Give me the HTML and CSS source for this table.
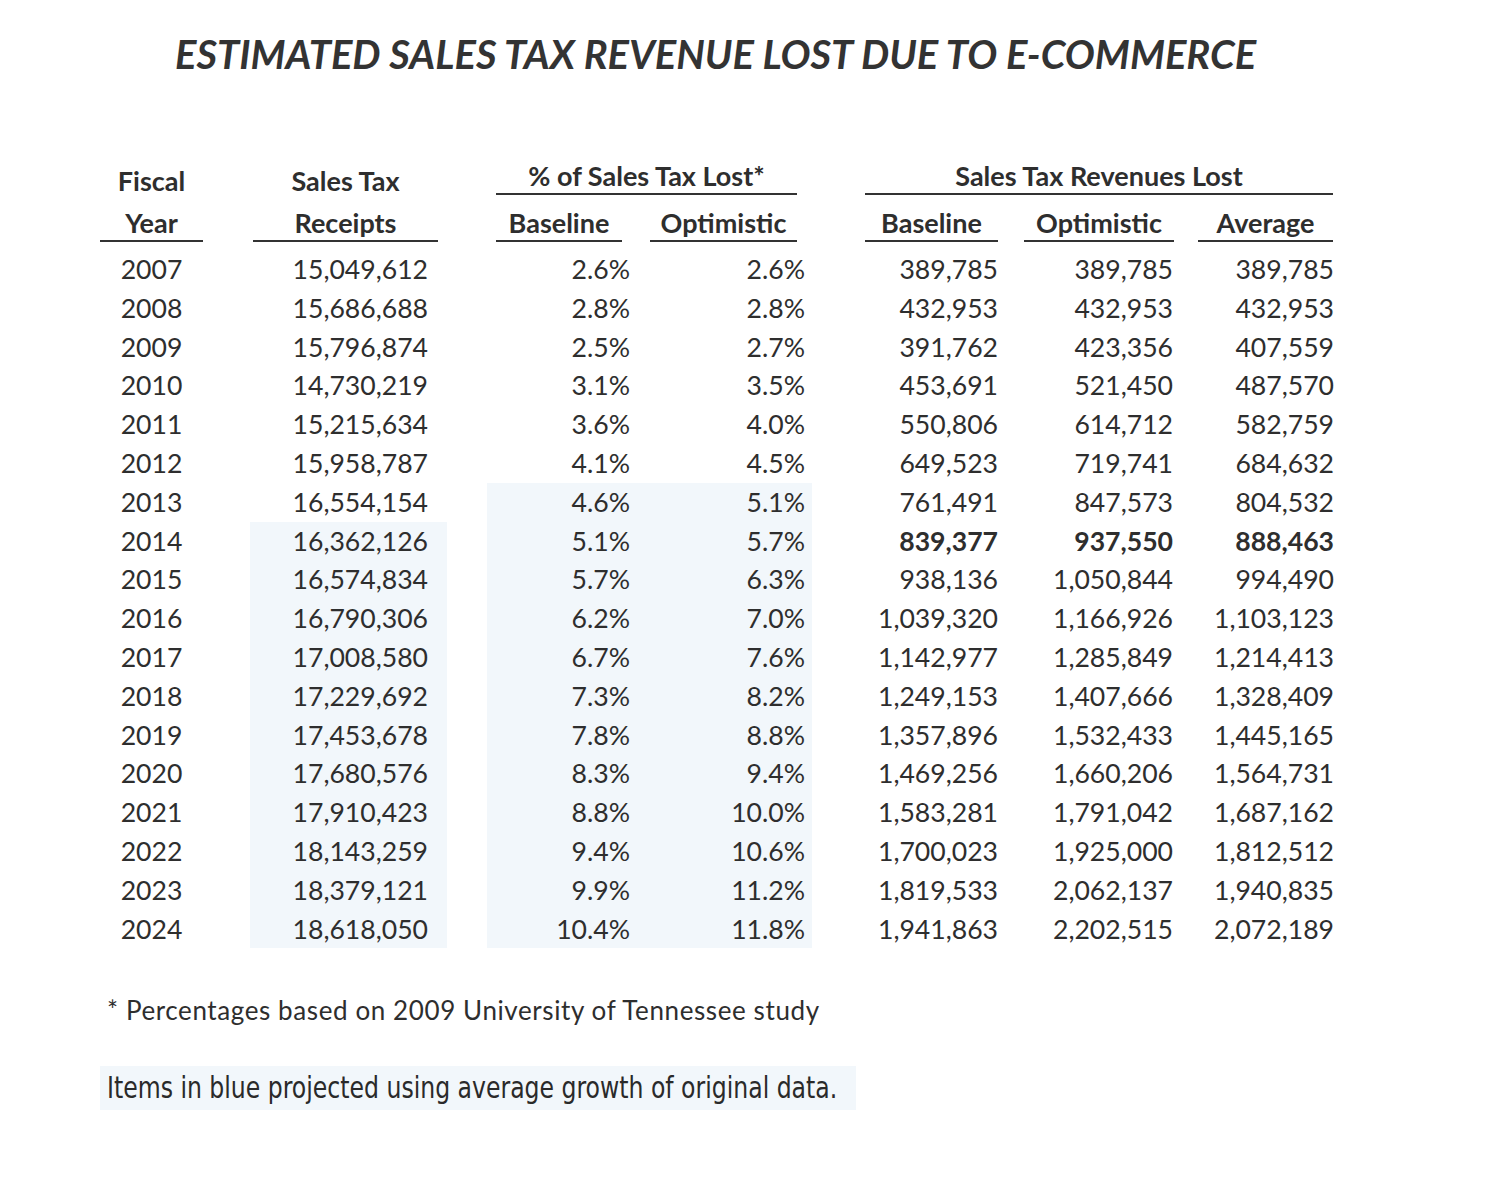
FILE: index.html
```html
<!DOCTYPE html>
<html lang="en">
<head>
<meta charset="utf-8">
<title>Estimated Sales Tax Revenue Lost Due to E-Commerce</title>
<link rel="stylesheet" href="styles.css">
</head>
<body>
<main class="page">
  <h1 class="title">ESTIMATED SALES TAX REVENUE LOST DUE TO E-COMMERCE</h1>

  <section class="table">
    <div class="head head-1">
      <div class="h h-year">Fiscal</div>
      <div class="h h-rec">Sales Tax</div>
      <div class="h h-pct-group">% of Sales Tax Lost*</div>
      <div class="h h-rev-group">Sales Tax Revenues Lost</div>
    </div>
    <div class="head head-2">
      <div class="h u h-year">Year</div>
      <div class="h u h-rec">Receipts</div>
      <div class="h u h-pb">Baseline</div>
      <div class="h u h-po">Optimistic</div>
      <div class="h u h-rb">Baseline</div>
      <div class="h u h-ro">Optimistic</div>
      <div class="h u h-ra">Average</div>
    </div>

    <div class="rows">
      <div class="row"><div class="c yr">2007</div><div class="c rec">15,049,612</div><div class="c pb">2.6%</div><div class="c po">2.6%</div><div class="c rb">389,785</div><div class="c ro">389,785</div><div class="c ra">389,785</div></div>
      <div class="row"><div class="c yr">2008</div><div class="c rec">15,686,688</div><div class="c pb">2.8%</div><div class="c po">2.8%</div><div class="c rb">432,953</div><div class="c ro">432,953</div><div class="c ra">432,953</div></div>
      <div class="row"><div class="c yr">2009</div><div class="c rec">15,796,874</div><div class="c pb">2.5%</div><div class="c po">2.7%</div><div class="c rb">391,762</div><div class="c ro">423,356</div><div class="c ra">407,559</div></div>
      <div class="row"><div class="c yr">2010</div><div class="c rec">14,730,219</div><div class="c pb">3.1%</div><div class="c po">3.5%</div><div class="c rb">453,691</div><div class="c ro">521,450</div><div class="c ra">487,570</div></div>
      <div class="row"><div class="c yr">2011</div><div class="c rec">15,215,634</div><div class="c pb">3.6%</div><div class="c po">4.0%</div><div class="c rb">550,806</div><div class="c ro">614,712</div><div class="c ra">582,759</div></div>
      <div class="row"><div class="c yr">2012</div><div class="c rec">15,958,787</div><div class="c pb">4.1%</div><div class="c po">4.5%</div><div class="c rb">649,523</div><div class="c ro">719,741</div><div class="c ra">684,632</div></div>
      <div class="row"><div class="c yr">2013</div><div class="c rec">16,554,154</div><div class="c pb proj">4.6%</div><div class="c po proj">5.1%</div><div class="c rb">761,491</div><div class="c ro">847,573</div><div class="c ra">804,532</div></div>
      <div class="row"><div class="c yr">2014</div><div class="c rec proj">16,362,126</div><div class="c pb proj">5.1%</div><div class="c po proj">5.7%</div><div class="c rb bold">839,377</div><div class="c ro bold">937,550</div><div class="c ra bold">888,463</div></div>
      <div class="row"><div class="c yr">2015</div><div class="c rec proj">16,574,834</div><div class="c pb proj">5.7%</div><div class="c po proj">6.3%</div><div class="c rb">938,136</div><div class="c ro">1,050,844</div><div class="c ra">994,490</div></div>
      <div class="row"><div class="c yr">2016</div><div class="c rec proj">16,790,306</div><div class="c pb proj">6.2%</div><div class="c po proj">7.0%</div><div class="c rb">1,039,320</div><div class="c ro">1,166,926</div><div class="c ra">1,103,123</div></div>
      <div class="row"><div class="c yr">2017</div><div class="c rec proj">17,008,580</div><div class="c pb proj">6.7%</div><div class="c po proj">7.6%</div><div class="c rb">1,142,977</div><div class="c ro">1,285,849</div><div class="c ra">1,214,413</div></div>
      <div class="row"><div class="c yr">2018</div><div class="c rec proj">17,229,692</div><div class="c pb proj">7.3%</div><div class="c po proj">8.2%</div><div class="c rb">1,249,153</div><div class="c ro">1,407,666</div><div class="c ra">1,328,409</div></div>
      <div class="row"><div class="c yr">2019</div><div class="c rec proj">17,453,678</div><div class="c pb proj">7.8%</div><div class="c po proj">8.8%</div><div class="c rb">1,357,896</div><div class="c ro">1,532,433</div><div class="c ra">1,445,165</div></div>
      <div class="row"><div class="c yr">2020</div><div class="c rec proj">17,680,576</div><div class="c pb proj">8.3%</div><div class="c po proj">9.4%</div><div class="c rb">1,469,256</div><div class="c ro">1,660,206</div><div class="c ra">1,564,731</div></div>
      <div class="row"><div class="c yr">2021</div><div class="c rec proj">17,910,423</div><div class="c pb proj">8.8%</div><div class="c po proj">10.0%</div><div class="c rb">1,583,281</div><div class="c ro">1,791,042</div><div class="c ra">1,687,162</div></div>
      <div class="row"><div class="c yr">2022</div><div class="c rec proj">18,143,259</div><div class="c pb proj">9.4%</div><div class="c po proj">10.6%</div><div class="c rb">1,700,023</div><div class="c ro">1,925,000</div><div class="c ra">1,812,512</div></div>
      <div class="row"><div class="c yr">2023</div><div class="c rec proj">18,379,121</div><div class="c pb proj">9.9%</div><div class="c po proj">11.2%</div><div class="c rb">1,819,533</div><div class="c ro">2,062,137</div><div class="c ra">1,940,835</div></div>
      <div class="row"><div class="c yr">2024</div><div class="c rec proj">18,618,050</div><div class="c pb proj">10.4%</div><div class="c po proj">11.8%</div><div class="c rb">1,941,863</div><div class="c ro">2,202,515</div><div class="c ra">2,072,189</div></div>
    </div>
  </section>

  <p class="note">* Percentages based on 2009 University of Tennessee study</p>
  <p class="legend"><span class="legend-text">Items in blue projected using average growth of original data.</span></p>
</main>
</body>
</html>
```

FILE: styles.css
```css
html, body {
  margin: 0;
  padding: 0;
  background: #ffffff;
}

.page {
  width: 1485px;
  min-height: 1200px;
  color: #2e2e2e;
  font-family: Lato, "Open Sans", sans-serif;
}

.title {
  margin: 0;
  padding: 31px 0 0 175px;
  font-size: 39.9px;
  line-height: 46px;
  font-weight: 700;
  font-style: italic;
  color: #333333;
  white-space: nowrap;
}

.table {
  margin-top: 81px;
  padding-left: 100px;
  font-size: 26.6px;
}

/* header rows */
.head {
  display: flex;
  align-items: flex-end;
}

.head-1 {
  height: 37px;
}

.head-2 {
  height: 47px;
}

.h {
  font-size: 27px;
  font-weight: 700;
  text-align: center;
  line-height: 34px;
  white-space: nowrap;
  box-sizing: border-box;
}

.u {
  border-bottom: 2px solid #333333;
  line-height: 34px;
}

.head-1 .h-year,
.head-1 .h-rec {
  line-height: 28px;
}

.h-year { width: 103px; }
.h-rec { width: 185px; margin-left: 50px; }
.h-pct-group { width: 301px; margin-left: 58px; border-bottom: 2px solid #333333; }
.h-rev-group { width: 468px; margin-left: 68px; border-bottom: 2px solid #333333; }
.h-pb { width: 126px; margin-left: 58px; }
.h-po { width: 147px; margin-left: 28px; }
.h-rb { width: 133px; margin-left: 68px; }
.h-ro { width: 150px; margin-left: 26px; }
.h-ra { width: 135px; margin-left: 24px; }

/* data rows */
.rows {
  margin-top: 8px;
}

.row {
  display: flex;
  height: 38.8px;
}

.c {
  line-height: 38.8px;
  text-align: right;
  white-space: nowrap;
  box-sizing: border-box;
}

.yr { width: 150px; text-align: center; padding-right: 47px; }
.rec { width: 197px; padding-right: 19px; }
.pb { width: 153px; margin-left: 40px; padding-right: 10px; }
.po { width: 172px; padding-right: 7px; }
.rb { width: 186px; }
.ro { width: 175px; }
.ra { width: 161px; }

.proj {
  background: #f2f7fb;
}

.bold {
  font-weight: 700;
}

/* footnotes */
.note {
  margin: 47px 0 0 107px;
  font-size: 26px;
  letter-spacing: 0.6px;
  line-height: 30px;
  white-space: nowrap;
}

.legend {
  margin: 41px 0 0 100px;
  width: 756px;
  height: 44px;
  padding-left: 7px;
  box-sizing: border-box;
  background: #f2f7fb;
  white-space: nowrap;
}

.legend-text {
  display: inline-block;
  font-family: "DejaVu Sans Condensed", "DejaVu Sans", sans-serif;
  font-stretch: condensed;
  font-size: 30px;
  line-height: 44px;
  color: #2a2a2a;
  transform: scaleX(0.873);
  transform-origin: left center;
}
```
